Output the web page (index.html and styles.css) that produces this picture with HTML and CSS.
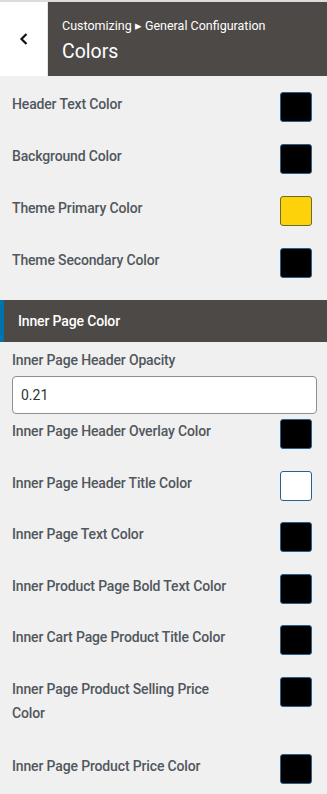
FILE: index.html
```html
<!DOCTYPE html>
<html lang="en">
<head>
  <meta charset="UTF-8" />
  <meta name="viewport" content="width=device-width, initial-scale=1.0"/>
  <title>Colors</title>
  <link rel="stylesheet" href="styles.css">
</head>
<body>

  <div class="panel-header">
    <button class="back-btn" aria-label="Back">
      <svg width="12" height="14" viewBox="0 0 12 14"><path d="M8.5 2 L3.5 7 L8.5 12" fill="none" stroke="#111" stroke-width="2.2"/></svg>
    </button>
    <div class="panel-title">
      <span class="crumb">Customizing &#9656; General Configuration</span>
      <h3>Colors</h3>
    </div>
  </div>

  <div class="controls">
    <div class="row"><label>Header Text Color</label><span class="swatch"></span></div>
    <div class="row"><label>Background Color</label><span class="swatch"></span></div>
    <div class="row"><label>Theme Primary Color</label><span class="swatch yellow"></span></div>
    <div class="row"><label>Theme Secondary Color</label><span class="swatch"></span></div>
  </div>

  <h4 class="section-title">Inner Page Color</h4>

  <div class="controls inner">
    <div class="field">
      <label for="opacity">Inner Page Header Opacity</label>
      <input type="text" id="opacity" value="0.21">
    </div>
    <div class="row"><label>Inner Page Header Overlay Color</label><span class="swatch"></span></div>
    <div class="row"><label>Inner Page Header Title Color</label><span class="swatch white"></span></div>
    <div class="row"><label>Inner Page Text Color</label><span class="swatch"></span></div>
    <div class="row"><label>Inner Product Page Bold Text Color</label><span class="swatch"></span></div>
    <div class="row"><label>Inner Cart Page Product Title Color</label><span class="swatch"></span></div>
    <div class="row tall"><label>Inner Page Product Selling Price Color</label><span class="swatch"></span></div>
    <div class="row"><label>Inner Page Product Price Color</label><span class="swatch"></span></div>
  </div>

</body>
</html>
```

FILE: styles.css
```css
* {
  box-sizing: border-box;
}
body {
  font-family: Roboto, "Liberation Sans", sans-serif;
  margin: 0;
  background: #f0f0f0;
  color: #50575e;
}

.panel-header {
  display: flex;
  height: 76px;
  border-top: 2px solid #dcdcde;
  background: #4d4947;
}

.back-btn {
  width: 48px;
  border: none;
  border-right: 1px solid #e6e6e6;
  background: #fff;
  display: flex;
  align-items: center;
  justify-content: center;
  padding: 0;
}

.panel-title {
  padding: 16px 14px 0;
  color: #fff;
}

.crumb {
  display: block;
  font-size: 12.5px;
  line-height: 16px;
}

.panel-title h3 {
  margin: 5px 0 0;
  font-size: 19.5px;
  font-weight: 400;
  line-height: 26px;
}

.controls {
  padding: 16px 15px 0 12px;
}

.row {
  display: flex;
  justify-content: space-between;
  align-items: flex-start;
  min-height: 52px;
}

.row label {
  font-size: 14px;
  font-weight: 500;
  line-height: 24px;
  max-width: 220px;
  letter-spacing: -0.15px;
}

.swatch {
  width: 32px;
  height: 30px;
  border: 1px solid #2c5f8a;
  border-radius: 3px;
  background: #000;
}

.swatch.yellow {
  background: #fdd20a;
  border-color: #6b6b2e;
}

.swatch.white {
  background: #fff;
  border-color: #2c5f8a;
}

.section-title {
  margin: 0;
  height: 42px;
  background: #4d4947;
  border-left: 4px solid #0073aa;
  color: #fff;
  font-size: 14px;
  font-weight: 500;
  line-height: 42px;
  padding-left: 14px;
  letter-spacing: -0.15px;
}

.controls.inner {
  padding-top: 7px;
}

.inner .row {
  min-height: 51.5px;
}

.inner .row.tall {
  min-height: 77px;
}

.field label {
  display: block;
  font-size: 14px;
  font-weight: 500;
  line-height: 22px;
  letter-spacing: -0.15px;
}

.field input {
  display: block;
  width: calc(100% + 5px);
  height: 38px;
  margin: 5px 0 5px;
  padding: 0 8px;
  border: 1px solid #8c8f94;
  border-radius: 4px;
  background: #fff;
  font-family: Roboto, "Liberation Sans", sans-serif;
  font-size: 14px;
  color: #2c3338;
}
```
